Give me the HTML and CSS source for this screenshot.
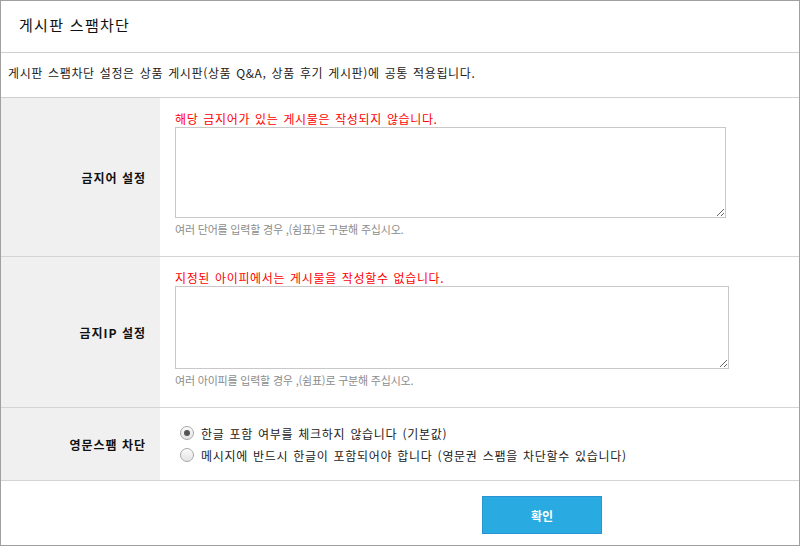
FILE: index.html
```html
<!DOCTYPE html>
<html lang="ko">
<head>
<meta charset="utf-8">
<title>게시판 스팸차단</title>
<link rel="stylesheet" href="styles.css">
</head>
<body>
<div class="panel">
  <div class="head"><h1 class="title">게시판 스팸차단</h1></div>
  <div class="desc">게시판 스팸차단 설정은 상품 게시판(상품 Q&amp;A, 상품 후기 게시판)에 공통 적용됩니다.</div>

  <div class="row">
    <div class="th">금지어 설정</div>
    <div class="td">
      <div class="warn">해당 금지어가 있는 게시물은 작성되지 않습니다.</div>
      <textarea class="box box-words"></textarea>
      <div class="hint">여러 단어를 입력할 경우 ,(쉼표)로 구분해 주십시오.</div>
    </div>
  </div>

  <div class="row">
    <div class="th">금지IP 설정</div>
    <div class="td">
      <div class="warn">지정된 아이피에서는 게시물을 작성할수 없습니다.</div>
      <textarea class="box box-ip"></textarea>
      <div class="hint">여러 아이피를 입력할 경우 ,(쉼표)로 구분해 주십시오.</div>
    </div>
  </div>

  <div class="row">
    <div class="th">영문스팸 차단</div>
    <div class="td td-radio">
      <label class="opt"><input type="radio" name="eng" class="radio" checked><span>한글 포함 여부를 체크하지 않습니다 (기본값)</span></label>
      <label class="opt"><input type="radio" name="eng" class="radio"><span>메시지에 반드시 한글이 포함되어야 합니다 (영문권 스팸을 차단할수 있습니다)</span></label>
    </div>
  </div>

  <div class="foot"><button class="btn" type="button">확인</button></div>
</div>
</body>
</html>
```

FILE: styles.css
```css
* { box-sizing: border-box; }
html, body { margin: 0; padding: 0; background: #fff; }
body {
  font-family: "Noto Sans CJK KR", "Noto Sans", "Liberation Sans", sans-serif;
  font-size: 12px;
  color: #333;
}
.panel {
  width: 800px;
  height: 546px;
  border: 1px solid #a0a0a0;
  display: flex;
  flex-direction: column;
}
.head {
  height: 52px;
  border-bottom: 1px solid #cfcfcf;
  padding-left: 18px;
}
.title {
  margin: 0;
  font-size: 15px;
  font-weight: normal;
  line-height: 48px;
  letter-spacing: 1.3px;
  color: #111;
}
.desc {
  height: 45px;
  border-bottom: 1px solid #cfcfcf;
  padding-left: 7px;
  line-height: 40px;
  color: #222;
  word-spacing: 1px;
  letter-spacing: 0.64px;
}
.row {
  display: flex;
  border-bottom: 1px solid #d4d4d4;
}
.th {
  width: 159px;
  flex: none;
  background: #f0f0f0;
  display: flex;
  align-items: center;
  justify-content: flex-end;
  padding-right: 14px;
  font-weight: bold;
  letter-spacing: 1px;
  color: #111;
}
.td {
  flex: 1;
  padding: 13px 0 19px 15px;
}
.warn {
  color: #ff0000;
  line-height: 16px;
  word-spacing: 1px;
  letter-spacing: 0.64px;
}
.box {
  display: block;
  border: 1px solid #c8c8c8;
  margin: 0;
  padding: 2px;
  font: inherit;
  background: #fff;
}
.box-words { width: 551px; height: 91px; }
.box-ip { width: 554px; height: 83px; }
.hint {
  margin-top: 3px;
  line-height: 16px;
  font-size: 11px;
  letter-spacing: -0.2px;
  color: #8c8c8c;
}
.td-radio {
  padding: 14px 0 14px 20px;
}
.opt {
  display: flex;
  align-items: center;
  height: 22px;
  color: #222;
  word-spacing: 1px;
  letter-spacing: 0.7px;
}
.radio {
  appearance: none;
  -webkit-appearance: none;
  width: 14px;
  height: 14px;
  margin: 0 7px 0 0;
  border: 1px solid #a9a9a9;
  border-radius: 50%;
  background: linear-gradient(#fafafa, #e4e4e4);
  position: relative;
  flex: none;
}
.radio:checked::after {
  content: "";
  position: absolute;
  left: 3px;
  top: 3px;
  width: 6px;
  height: 6px;
  border-radius: 50%;
  background: #555;
}
.foot {
  flex: 1;
  padding: 15px 0 0 481px;
}
.btn {
  width: 120px;
  height: 38px;
  background: #29abe2;
  border: 1px solid #2a93d4;
  color: #fff;
  font: inherit;
  font-weight: bold;
  font-size: 12px;
  padding: 0;
}
```
